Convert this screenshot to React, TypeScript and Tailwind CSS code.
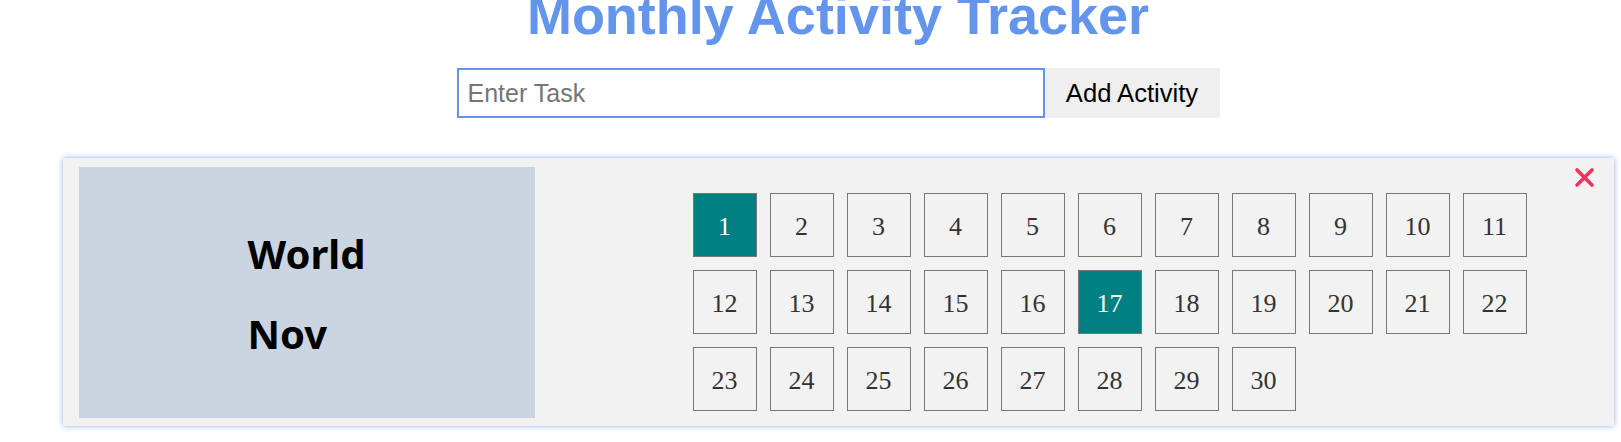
import React, { useState } from "react";

const DAYS = Array.from({ length: 30 }, (_, i) => i + 1);

/**
 * A single day cell in the activity grid
 */
function DayCell({ day, done, onToggle }: { day: number; done: boolean; onToggle: () => void }) {
  return (
    <button
      type="button"
      onClick={onToggle}
      className={
        "flex h-[64px] w-[64px] items-center justify-center border border-[#777] pt-[2px] text-[26px] " +
        (done ? "bg-[#008080] text-white" : "bg-[#f2f2f2] text-[#333]")
      }
      style={{ fontFamily: '"Liberation Serif", "Times New Roman", serif' }}
    >
      {day}
    </button>
  );
}

export default function App() {
  const [task, setTask] = useState("");
  const [done, setDone] = useState<number[]>([1, 17]);

  // toggle a day on or off
  const toggleDay = (day: number) => {
    setDone((prev) => (prev.includes(day) ? prev.filter((d) => d !== day) : [...prev, day]));
  };

  return (
    <div
      className="flex min-h-screen flex-col items-center bg-white pl-[55px]"
      style={{ fontFamily: '"Liberation Sans", Arial, sans-serif' }}
    >
      <h1 className="-mt-[15px] text-[54px] font-bold leading-[61px] text-[#6495ed]">
        Monthly Activity Tracker
      </h1>

      {/* Task input */}
      <div className="mt-[22px] flex">
        <input
          type="text"
          value={task}
          onChange={(e) => setTask(e.target.value)}
          placeholder="Enter Task"
          className="h-[50px] w-[588px] border-2 border-[#6495ed] bg-white px-[9px] text-[25px] text-black outline-none placeholder:text-[#757575]"
        />
        <button type="button" className="h-[50px] w-[175px] bg-[#efefef] text-[25.6px] text-black">
          Add Activity
        </button>
      </div>

      {/* Activity card */}
      <div className="relative mt-[40px] flex h-[268px] w-[1551px] items-start bg-[#f2f2f2] pl-[16px] pt-[9px] shadow-[0_0_6px_#8fb0f2]">
        <div className="flex h-[251px] w-[456px] items-center justify-center bg-[#cbd5e1]">
          <div
            className="pt-[2px] text-[40px] font-bold leading-[80px] text-black"
            style={{ fontFamily: '"Noto Sans", "Open Sans", sans-serif' }}
          >
            <div>World</div>
            <div>Nov</div>
          </div>
        </div>

        <div className="ml-[158px] mt-[26px] grid grid-cols-[repeat(11,64px)] gap-[13px]">
          {DAYS.map((day) => (
            <DayCell key={day} day={day} done={done.includes(day)} onToggle={() => toggleDay(day)} />
          ))}
        </div>

        <button type="button" className="absolute right-[19px] top-[9px] h-[21px] w-[21px]">
          <svg viewBox="0 0 21 21" className="h-full w-full">
            <path d="M3 3 L18 18 M18 3 L3 18" stroke="#ff2e5e" strokeWidth="3.6" strokeLinecap="round" />
          </svg>
        </button>
      </div>
    </div>
  );
}
